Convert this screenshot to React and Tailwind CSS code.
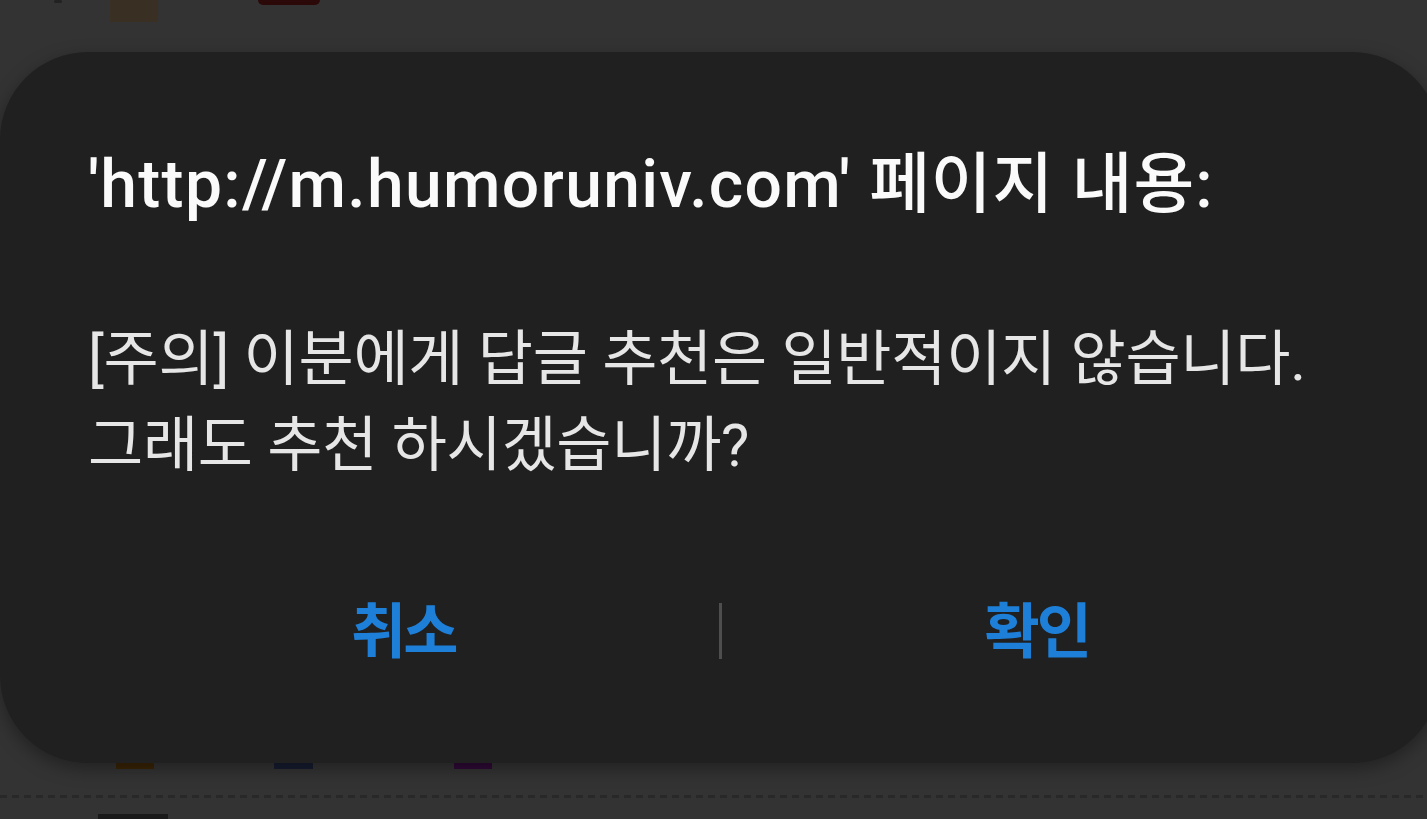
export default function App() {
  const font = { fontFamily: "Roboto, 'Noto Sans CJK KR', sans-serif" };

  return (
    <main
      className="relative h-[819px] w-full overflow-hidden bg-[#333333]"
      style={font}
    >
      {/* dimmed page behind the dialog */}
      <div className="flex h-[52px] items-start">
        <div className="ml-[54px] h-[3px] w-[8px] rounded-full bg-[#222]" />
        <div className="ml-[36px] flex flex-col items-start">
          <div className="ml-[12px] h-[22px] w-[48px] bg-[#392f22]" />
        </div>
        <div className="ml-[100px] h-[5px] w-[62px] rounded-b-full bg-[#2c0909]" />
      </div>
      <div className="h-[710px]" />
      <div className="flex items-start">
        <div className="ml-[116px] h-[7px] w-[38px] bg-[#3a2406]" />
        <div className="ml-[120px] h-[7px] w-[39px] bg-[#161c30]" />
        <div className="ml-[141px] h-[7px] w-[38px] bg-[#2e0a36]" />
      </div>
      <div className="mt-[26px] h-[3px] w-full bg-[repeating-linear-gradient(90deg,#282828_0_7px,transparent_7px_12px)]" />
      <div className="ml-[98px] mt-[16px] h-[10px] w-[70px] bg-[#1a1a1a]" />

      {/* alert dialog */}
      <div className="absolute left-0 top-[52px] flex h-[711px] w-[1440px] flex-col rounded-[88px] bg-[#202020] px-[88px] pt-[93px] shadow-[0_6px_18px_rgba(0,0,0,0.35)]">
        <h1 className="text-[66px] font-medium leading-[80px] tracking-[1.3px] text-[#fafafa]">
          'http://m.humoruniv.com'{" "}
          <span className="tracking-[1px]">페이지 내용:</span>
        </h1>
        <p className="mt-[92px] text-[60px] leading-[86px] tracking-[-0.3px] text-[#e6e6e6]">
          [주의] 이분에게 답글 추천은 일반적이지 않습니다.
          <br />
          그래도 추천 하시겠습니까?
        </p>
        <div className="mt-[104px] flex items-center">
          <button className="flex-1 text-[60px] font-bold leading-[80px] tracking-[-3px] text-[#1d7fd8]">
            취소
          </button>
          <div className="mt-[-4px] h-[56px] w-[3px] bg-[#4e4e4e]" />
          <button className="flex-1 text-[60px] font-bold leading-[80px] tracking-[-3px] text-[#1d7fd8]">
            확인
          </button>
        </div>
      </div>
    </main>
  );
}
